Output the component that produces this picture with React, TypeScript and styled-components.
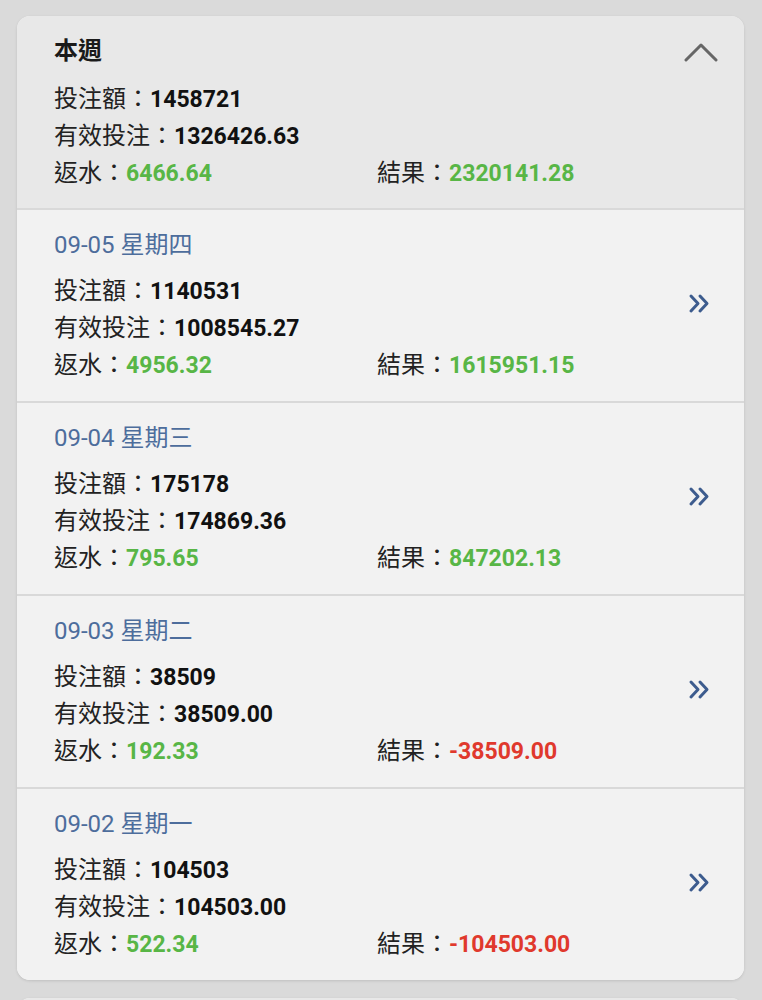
import React from "react";
import styled, { createGlobalStyle } from "styled-components";

const Global = createGlobalStyle`
  html, body { margin: 0; padding: 0; background: #dadada; }
  body { font-family: Roboto, "Noto Sans CJK TC", sans-serif; -webkit-font-smoothing: antialiased; }
`;

const Page = styled.div`
  padding: 16px 18px 0 17px;
  display: flex;
  flex-direction: column;
  gap: 18px;
`;

const Card = styled.div`
  background: #f2f2f2;
  border-radius: 13px;
  overflow: hidden;
  box-shadow: 0 1px 3px rgba(0, 0, 0, 0.12);
`;

const Section = styled.div<{ $head?: boolean }>`
  display: flex;
  align-items: ${(p) => (p.$head ? "flex-start" : "center")};
  background: ${(p) => (p.$head ? "#e8e8e8" : "#f2f2f2")};
  padding: ${(p) => (p.$head ? "17px 26px 16px 37px" : "17px 32px 17px 37px")};
  border-top: ${(p) => (p.$head ? "none" : "2px solid #d9d9d9")};
`;

const Body = styled.div`
  flex: 1;
  display: flex;
  flex-direction: column;
`;

const Title = styled.div`
  font-size: 24px;
  line-height: 37px;
  font-weight: 700;
  color: #1a1a1a;
  margin-bottom: 11px;
`;

const DateLine = styled.div`
  font-size: 24px;
  line-height: 37px;
  color: #4d6d9c;
  margin-bottom: 9px;
`;

const Line = styled.div`
  display: flex;
  align-items: baseline;
  font-size: 24px;
  line-height: 37px;
  color: #222;
`;

const Cell = styled.div<{ $w?: number }>`
  width: ${(p) => (p.$w ? `${p.$w}px` : "auto")};
  white-space: nowrap;
`;

const Value = styled.span<{ $tone?: "green" | "red" }>`
  font-size: 23px;
  font-weight: 700;
  color: ${(p) => (p.$tone === "green" ? "#58b646" : p.$tone === "red" ? "#e0392d" : "#111")};
`;

const IconBox = styled.div<{ $top?: number }>`
  display: flex;
  margin-top: ${(p) => p.$top ?? 0}px;
`;

type Row = {
  date?: string;
  title?: string;
  bet: string;
  valid: string;
  rebate: string;
  result: string;
};

const tone = (v: string) => (v.startsWith("-") ? "red" : "green");

const UpIcon = () => (
  <svg width="34" height="20" viewBox="0 0 34 20">
    <polyline points="2,17 17,2 32,17" fill="none" stroke="#666" strokeWidth="3" strokeLinecap="round" strokeLinejoin="round" />
  </svg>
);

const DownIcon = () => (
  <svg width="34" height="20" viewBox="0 0 34 20">
    <polyline points="2,3 17,18 32,3" fill="none" stroke="#666" strokeWidth="3" strokeLinecap="round" strokeLinejoin="round" />
  </svg>
);

const DoubleIcon = () => (
  <svg width="24" height="24" viewBox="0 0 24 24">
    <polyline points="3,4 10,11.5 3,19" fill="none" stroke="#3d5c8e" strokeWidth="3" strokeLinecap="round" strokeLinejoin="round" />
    <polyline points="12,4 19,11.5 12,19" fill="none" stroke="#3d5c8e" strokeWidth="3" strokeLinecap="round" strokeLinejoin="round" />
  </svg>
);

const Stats = ({ r }: { r: Row }) => (
  <>
    <Line>
      <Cell>投注額：<Value>{r.bet}</Value></Cell>
    </Line>
    <Line>
      <Cell>有效投注：<Value>{r.valid}</Value></Cell>
    </Line>
    <Line>
      <Cell $w={323}>返水：<Value $tone="green">{r.rebate}</Value></Cell>
      <Cell>結果：<Value $tone={tone(r.result)}>{r.result}</Value></Cell>
    </Line>
  </>
);

const week: Row = { title: "本週", bet: "1458721", valid: "1326426.63", rebate: "6466.64", result: "2320141.28" };

const days: Row[] = [
  { date: "09-05 星期四", bet: "1140531", valid: "1008545.27", rebate: "4956.32", result: "1615951.15" },
  { date: "09-04 星期三", bet: "175178", valid: "174869.36", rebate: "795.65", result: "847202.13" },
  { date: "09-03 星期二", bet: "38509", valid: "38509.00", rebate: "192.33", result: "-38509.00" },
  { date: "09-02 星期一", bet: "104503", valid: "104503.00", rebate: "522.34", result: "-104503.00" },
];

export default function App() {
  return (
    <>
      <Global />
      <Page>
        <Card>
          <Section $head>
            <Body>
              <Title>{week.title}</Title>
              <Stats r={week} />
            </Body>
            <IconBox $top={10}>
              <UpIcon />
            </IconBox>
          </Section>
          {days.map((d) => (
            <Section key={d.date}>
              <Body>
                <DateLine>{d.date}</DateLine>
                <Stats r={d} />
              </Body>
              <IconBox $top={-4}>
                <DoubleIcon />
              </IconBox>
            </Section>
          ))}
        </Card>
        <Card>
          <Section $head>
            <Body>
              <Title>上週</Title>
            </Body>
            <IconBox $top={10}>
              <DownIcon />
            </IconBox>
          </Section>
        </Card>
      </Page>
    </>
  );
}
